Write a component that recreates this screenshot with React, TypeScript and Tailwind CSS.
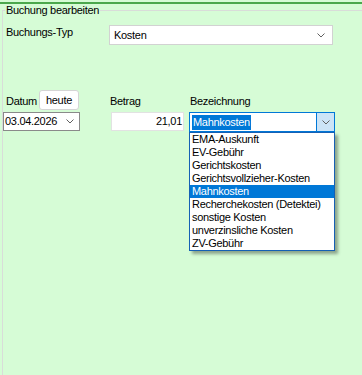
import React from "react"

function Chevron({ className = "" }: { className?: string }) {
  return (
    <svg width="8" height="5" viewBox="0 0 8 5" className={className}>
      <path d="M0.5 0.5 L4 4 L7.5 0.5" fill="none" stroke="#606060" strokeWidth="1" />
    </svg>
  )
}

const items = [
  "EMA-Auskunft",
  "EV-Gebühr",
  "Gerichtskosten",
  "Gerichtsvollzieher-Kosten",
  "Mahnkosten",
  "Recherchekosten (Detektei)",
  "sonstige Kosten",
  "unverzinsliche Kosten",
  "ZV-Gebühr",
]

export default function App() {
  return (
    <div className="h-[375px] w-[362px] overflow-hidden bg-[#d6fcd6] font-['Liberation_Sans',Arial,sans-serif] text-[11px] leading-[13px] tracking-[-0.3px] text-black">
      <div className="mt-[2px] h-[2px] bg-[#4aa84c]" />
      <fieldset className="ml-[2px] h-[400px] w-[420px] border-l border-t border-[#d9dcd9]">
        <legend className="ml-[2px] px-[1px]">Buchung bearbeiten</legend>

        {/* Buchungs-Typ */}
        <div className="mt-[8px] flex items-start">
          <div className="mt-[1px] w-[106px] pl-[3px]">Buchungs-Typ</div>
          <div className="flex h-[20px] w-[224px] items-center justify-between border border-[#d2d2d2] bg-white pl-[4px] pr-[7px]">
            <span>Kosten</span>
            <Chevron />
          </div>
        </div>

        {/* Datum / Betrag / Bezeichnung */}
        <div className="mt-[45px] flex items-start">
          <div className="flex w-[77px] flex-col">
            <div className="flex h-[20px] items-start">
              <span className="ml-[3px] mt-[5px] w-[33px]">Datum</span>
              <div className="flex h-[20px] w-[40px] items-center justify-center rounded-[3px] border border-[#d5d5d5] bg-white">
                heute
              </div>
            </div>
            <div className="mt-[2px] flex h-[19px] items-center justify-between border border-[#8a8a8a] bg-white pl-[1px] pr-[5px]">
              <span>03.04.2026</span>
              <Chevron />
            </div>
          </div>

          <div className="ml-[30px] flex w-[74px] flex-col">
            <div className="h-[22px] pt-[5px]">Betrag</div>
            <div className="ml-[1px] flex h-[19px] items-center justify-end border border-[#e2e2e2] bg-white pr-[1px]">
              21,01
            </div>
          </div>

          <div className="ml-[5px] flex w-[146px] flex-col">
            <div className="ml-[1px] h-[22px] pt-[5px]">Bezeichnung</div>
            <div className="relative">
              <div className="flex h-[20px] items-stretch border border-[#0078d7] bg-white">
                <div className="flex flex-1 items-center pl-[2px]">
                  <span className="bg-[#0078d7] px-[1px] py-[1px] text-white">Mahnkosten</span>
                </div>
                <div className="flex w-[18px] items-center justify-center border-l border-[#0078d7] bg-[#cce4f7]">
                  <Chevron />
                </div>
              </div>
              <ul className="absolute left-0 top-full w-[146px] border border-[#1660b4] bg-white shadow-[3px_3px_3px_rgba(0,0,0,0.35)]">
                {items.map((item) => (
                  <li
                    key={item}
                    className={
                      item === "Mahnkosten"
                        ? "h-[13px] bg-[#0078d7] pl-[2px] text-white"
                        : "h-[13px] pl-[2px]"
                    }
                  >
                    {item}
                  </li>
                ))}
              </ul>
            </div>
          </div>
        </div>
      </fieldset>
    </div>
  )
}
